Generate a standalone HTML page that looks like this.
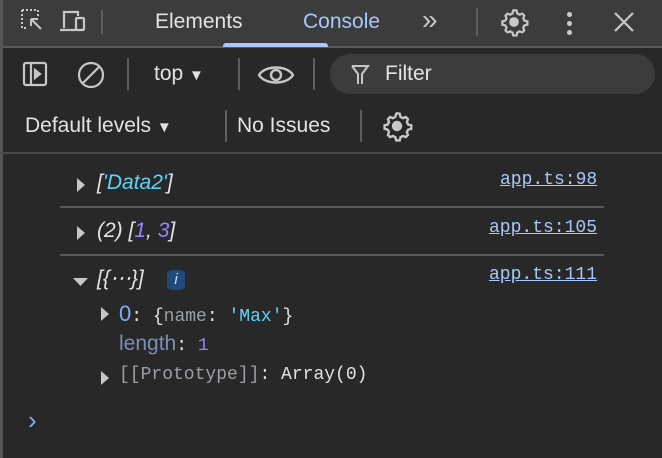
<!DOCTYPE html>
<html><head><style>
*{margin:0;padding:0;box-sizing:border-box}
body{width:662px;height:458px;background:#282828;font-family:"Liberation Sans",sans-serif;position:relative;overflow:hidden;color:#e3e3e3}
.a{position:absolute;white-space:nowrap}
.mono{font-family:"Liberation Mono",monospace}
.sep{position:absolute;width:2px;background:#5e5e5e}
</style></head><body>
<div class="a" style="left:0;top:0;width:662px;height:47px;background:#3c3c3c"></div>
<div class="a" style="left:0;top:46px;width:662px;height:2px;background:#5a5a5a"></div>
<div class="a" style="left:0;top:0;width:3px;height:458px;background:#555"></div>
<div class="a" style="left:0;top:152px;width:662px;height:2px;background:#4a4a4a"></div>
<svg class="a" style="left:20px;top:8px" width="30" height="28" viewBox="0 0 30 28" fill="none" stroke="#c7c7c7" stroke-width="2">
<path d="M2 2h16v6 M2 2v18h6" stroke-dasharray="2 2"/><path d="M11 11l10 10M11 11h7M11 11v7"/></svg>
<svg class="a" style="left:58px;top:8px" width="30" height="28" viewBox="0 0 30 28" fill="none" stroke="#c7c7c7" stroke-width="2.2">
<path d="M6 20V4h14v4M2 22h16"/><rect x="18" y="10" width="8" height="12" rx="1"/></svg>
<div class="sep" style="left:101px;top:10px;height:24px"></div>
<div class="a" style="left:155px;top:10px;font-size:21px;color:#e3e3e3">Elements</div>
<div class="a" style="left:303px;top:10px;font-size:21px;color:#a8c7fa">Console</div>
<div class="a" style="left:223px;top:43px;width:105px;height:4px;background:#a8c7fa;border-radius:3px 3px 0 0"></div>
<div class="a" style="left:422px;top:4px;font-size:28px;color:#c7c7c7">&#187;</div>
<div class="sep" style="left:476px;top:8px;height:28px"></div>
<svg class="a" style="left:498px;top:7px" width="32" height="30" viewBox="0 0 24 24" fill="none" stroke="#c7c7c7" stroke-width="1.8">
<path d="M12 2.5l2 .3.6 2.3 1.8 1 2.2-.8 1.6 1.6-.8 2.2 1 1.8 2.3.6v2.6l-2.3.6-1 1.8.8 2.2-1.6 1.6-2.2-.8-1.8 1-.6 2.3h-2.6l-.6-2.3-1.8-1-2.2.8-1.6-1.6.8-2.2-1-1.8-2.3-.6v-2.6l2.3-.6 1-1.8-.8-2.2 1.6-1.6 2.2.8 1.8-1 .6-2.3z"/><circle cx="12" cy="12" r="3" fill="#c7c7c7"/></svg>
<div class="a" style="left:567px;top:10px;width:5px;height:26px;background:radial-gradient(circle,#c7c7c7 2.4px,transparent 2.6px) 0 0/5px 9px repeat-y"></div>
<svg class="a" style="left:612px;top:10px" width="24" height="24" viewBox="0 0 24 24" stroke="#c7c7c7" stroke-width="2.2"><path d="M3 3l18 18M21 3L3 21"/></svg>
<svg class="a" style="left:22px;top:61px" width="28" height="28" viewBox="0 0 28 28" fill="none" stroke="#c7c7c7" stroke-width="2.2"><rect x="2" y="2" width="22" height="22" rx="2"/><path d="M9 2v22"/><path d="M13 9l5 4-5 4z" fill="#c7c7c7"/></svg>
<svg class="a" style="left:76px;top:60px" width="30" height="30" viewBox="0 0 30 30" fill="none" stroke="#c7c7c7" stroke-width="2.2"><circle cx="15" cy="15" r="12"/><path d="M7 23L23 7"/></svg>
<div class="sep" style="left:127px;top:58px;height:32px"></div>
<div class="a" style="left:154px;top:62px;font-size:21px">top <span style="font-size:15px">&#9660;</span></div>
<div class="sep" style="left:238px;top:58px;height:32px"></div>
<svg class="a" style="left:257px;top:62px" width="38" height="26" viewBox="0 0 38 26" fill="none" stroke="#c7c7c7" stroke-width="2.4"><path d="M2 13C8 3 30 3 36 13 30 23 8 23 2 13z"/><circle cx="19" cy="13" r="5"/></svg>
<div class="sep" style="left:313px;top:58px;height:32px"></div>
<div class="a" style="left:330px;top:54px;width:325px;height:40px;border-radius:20px;background:#3c3c3c"></div>
<svg class="a" style="left:350px;top:64px" width="20" height="22" viewBox="0 0 20 22" fill="none" stroke="#c7c7c7" stroke-width="2"><path d="M2 2h16l-6 8v10M8 20V10L2 2"/></svg>
<div class="a" style="left:385px;top:62px;font-size:21px;color:#e3e3e3">Filter</div>
<div class="a" style="left:25px;top:114px;font-size:21px">Default levels <span style="font-size:15px">&#9660;</span></div>
<div class="sep" style="left:225px;top:110px;height:32px"></div>
<div class="a" style="left:237px;top:114px;font-size:21px">No Issues</div>
<div class="sep" style="left:360px;top:110px;height:32px"></div>
<svg class="a" style="left:381px;top:110px" width="32" height="32" viewBox="0 0 24 24" fill="none" stroke="#c7c7c7" stroke-width="1.8">
<path d="M12 2.5l2 .3.6 2.3 1.8 1 2.2-.8 1.6 1.6-.8 2.2 1 1.8 2.3.6v2.6l-2.3.6-1 1.8.8 2.2-1.6 1.6-2.2-.8-1.8 1-.6 2.3h-2.6l-.6-2.3-1.8-1-2.2.8-1.6-1.6.8-2.2-1-1.8-2.3-.6v-2.6l2.3-.6 1-1.8-.8-2.2 1.6-1.6 2.2.8 1.8-1 .6-2.3z"/><circle cx="12" cy="12" r="3" fill="#c7c7c7"/></svg>
<div class="a" style="left:60px;top:206px;width:544px;height:2px;background:#5a5a5a"></div>
<div class="a" style="left:60px;top:254px;width:544px;height:2px;background:#5a5a5a"></div>
<svg class="a" style="left:76px;top:177px" width="10" height="16"><path d="M1 1l8 7-8 7z" fill="#c7c7c7"/></svg>
<div class="a" style="left:97px;top:171px;font-size:21px;font-style:italic;color:#e3e3e3">[<span style="color:#5cd5fb">'Data2'</span>]</div>
<div class="a mono" style="left:500px;top:170px;font-size:18px;color:#a8c7fa;text-decoration:underline">app.ts:98</div>
<svg class="a" style="left:76px;top:225px" width="10" height="16"><path d="M1 1l8 7-8 7z" fill="#c7c7c7"/></svg>
<div class="a" style="left:97px;top:219px;font-size:21px;font-style:italic;color:#e3e3e3">(2) [<span style="color:#9980ff">1</span>, <span style="color:#9980ff">3</span>]</div>
<div class="a mono" style="left:489px;top:218px;font-size:18px;color:#a8c7fa;text-decoration:underline">app.ts:105</div>
<svg class="a" style="left:72px;top:276px" width="18" height="12"><path d="M1 2h15l-7.5 8z" fill="#c7c7c7"/></svg>
<div class="a" style="left:97px;top:266px;font-size:21px;font-style:italic;color:#e3e3e3">[{&#8943;}]</div>
<div class="a" style="left:167px;top:270px;width:18px;height:20px;border-radius:4px;background:#1f4b7a;color:#c7e0ff;font-size:15px;font-style:italic;text-align:center;line-height:20px">i</div>
<div class="a mono" style="left:489px;top:265px;font-size:18px;color:#a8c7fa;text-decoration:underline">app.ts:111</div>
<svg class="a" style="left:100px;top:306px" width="10" height="16"><path d="M1 1l8 7-8 7z" fill="#c7c7c7"/></svg>
<div class="a mono" style="left:119px;top:301px;font-size:18px;color:#e3e3e3"><span style="color:#7cacf8;font-family:'Liberation Sans';font-size:22px">0</span>: {<span style="color:#9aa0a6">name</span>: <span style="color:#5cd5fb">'Max'</span>}</div>
<div class="a" style="left:119px;top:332px;font-size:21px;color:#7a8fb8">length<span class="mono" style="color:#e3e3e3;font-size:18px">: <span style="color:#9980ff">1</span></span></div>
<svg class="a" style="left:100px;top:370px" width="10" height="16"><path d="M1 1l8 7-8 7z" fill="#c7c7c7"/></svg>
<div class="a mono" style="left:119px;top:365px;font-size:18px;color:#e3e3e3"><span style="color:#9aa0a6">[[Prototype]]</span>: Array(0)</div>
<div class="a" style="left:28px;top:405px;font-size:26px;color:#7cacf8">&#8250;</div>
</body></html>
